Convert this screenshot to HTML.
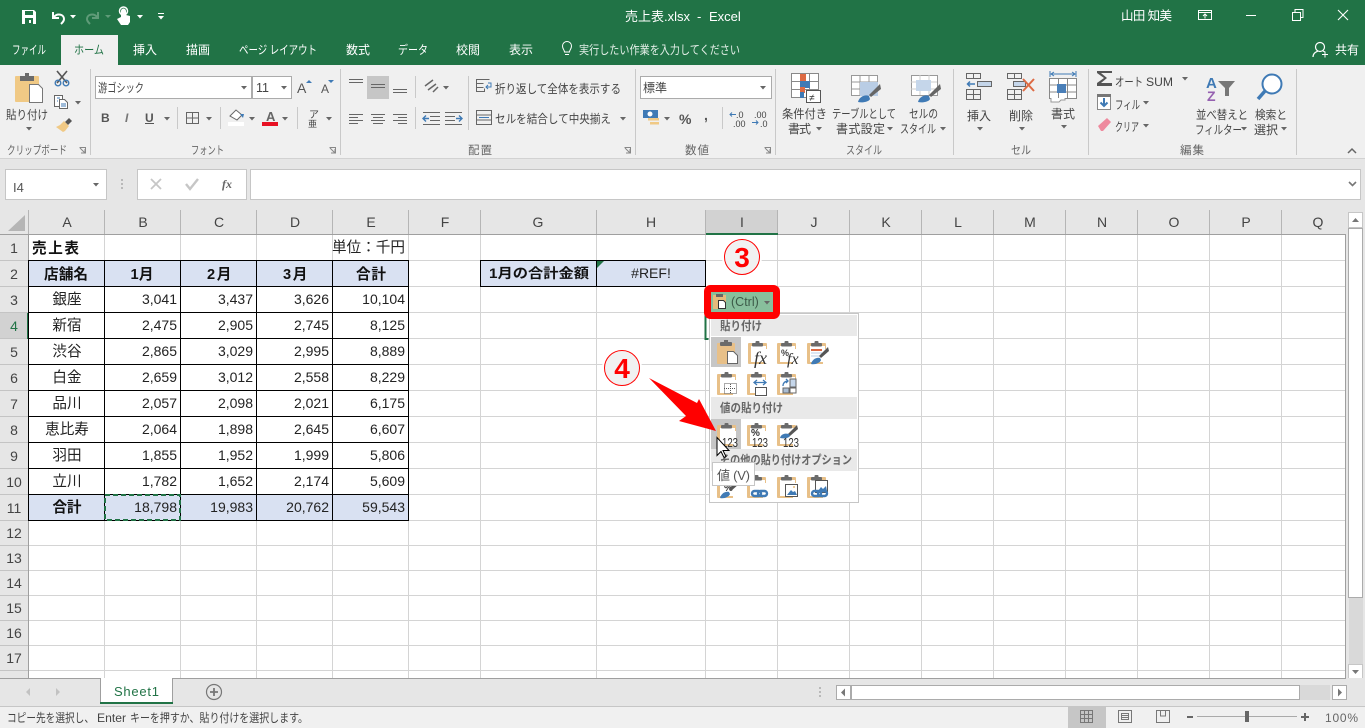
<!DOCTYPE html>
<html lang="ja"><head><meta charset="utf-8"><title>売上表.xlsx - Excel</title>
<style>
html,body{margin:0;padding:0;background:#e6e6e6;overflow:hidden}
svg{display:block;position:absolute;left:0;top:0}
text{font-family:"Liberation Sans","Noto Sans CJK JP",sans-serif;font-size:12px;fill:#444;white-space:pre}
.w{fill:#fff}.tab{fill:#fff;font-size:12px}
.g{fill:#666;font-size:11.5px}
.n{font-size:14px;fill:#222;text-anchor:end}
.c{font-size:14.6px;fill:#222;text-anchor:middle}
.b{font-size:14.6px;fill:#111;font-weight:700;text-anchor:middle}
.h{font-size:14px;fill:#444;text-anchor:middle}
.r{font-size:14px;fill:#444;text-anchor:middle}
.m{font-size:12px;fill:#666;font-weight:700}
.k{font-size:12.5px;fill:#333}
</style></head><body>
<svg width="1365" height="728" viewBox="0 0 1365 728" xmlns="http://www.w3.org/2000/svg">
<defs>
<path id="dd" d="M-3 0h6l-3 3.5z" fill="#666"/>
<path id="dw" d="M-3 0h6l-3 3.5z" fill="#fff"/>
<g id="cb"><rect x="0" y="2" width="19" height="21" rx="1" fill="#e8c088"/><rect x="3" y="5" width="15" height="16" fill="#fff"/><rect x="16" y="8" width="3" height="15" fill="#fff"/><rect x="4" y="2" width="11" height="3.500" rx="1" fill="#6b6b6b"/><rect x="7.500" y="0" width="4" height="3" rx="1" fill="#6b6b6b"/></g>
<g id="chain" fill="none" stroke="#3f7ab5" stroke-width="2.400"><rect x="0" y="0" width="9" height="5" rx="2.500"/><rect x="6" y="0" width="9" height="5" rx="2.500"/></g>
</defs>

<rect width="1365" height="728" fill="#e6e6e6"/>
<!-- title bar -->
<rect width="1365" height="65" fill="#217346"/>
<rect x="61" y="35" width="57" height="31" fill="#f0f0f0"/>
<rect y="65" width="1365" height="93" fill="#f0f0f0"/>
<rect y="158" width="1365" height="1" fill="#d2d2d2"/>

<!-- QAT -->
<path d="M22 10h12l2 2v12H22z" fill="#fff"/><rect x="25" y="11" width="8" height="4" fill="#217346"/><rect x="25" y="18" width="8" height="6" fill="#217346"/><rect x="29" y="20" width="2" height="3" fill="#fff"/>
<path d="M53 12v6h6M54 17c3-4 10-3 10 2 0 2-1 3-3 5" fill="none" stroke="#fff" stroke-width="2"/>
<use href="#dw" x="73" y="15"/>
<path d="M98 12v6h-6M97 17c-3-4-10-3-10 2 0 2 1 3 3 5" fill="none" stroke="#5f9b78" stroke-width="2"/>
<path d="M105 15h6l-3 3z" fill="#5f9b78"/>
<path d="M121 17v-6a2.500 2.500 0 0 1 5 0v4l4 1v6l-2 3h-7l-4-6 2-1z" fill="#fff"/><circle cx="123.500" cy="11" r="4" fill="none" stroke="#fff" stroke-width="1.500"/>
<use href="#dw" x="140" y="15"/>
<rect x="158" y="13" width="6" height="1" fill="#fff"/><use href="#dw" x="161" y="16"/>
<text x="625" y="21" class="w" style="font-size:13px">売上表.xlsx</text><text x="697" y="21" class="w" style="font-size:13px">-</text><text x="709" y="21" class="w" style="font-size:13px">Excel</text>
<text x="1121" y="20" class="w" style="font-size:12.500px" textLength="51">山田 知美</text>
<path d="M1198.500 10.500h13v9h-13zM1198.500 12.500h13M1205 18.500v-4M1203 16l2-2 2 2" fill="none" stroke="#fff"/>
<rect x="1246" y="15" width="10" height="1" fill="#fff"/>
<path d="M1292.500 12.500h8v8h-8zM1295 12v-2.500h8v8h-2.500" fill="none" stroke="#fff"/>
<path d="M1338 10l10 10M1348 10l-10 10" stroke="#fff" stroke-width="1.100"/>

<!-- tabs -->
<text x="12" y="54" class="tab" textLength="34" lengthAdjust="spacingAndGlyphs">ファイル</text>
<text x="74" y="54" style="fill:#217346" textLength="30" lengthAdjust="spacingAndGlyphs">ホーム</text>
<text x="133" y="54" class="tab" textLength="24">挿入</text>
<text x="186" y="54" class="tab" textLength="24">描画</text>
<text x="239" y="54" class="tab" textLength="78" lengthAdjust="spacingAndGlyphs">ページ レイアウト</text>
<text x="346" y="54" class="tab" textLength="24">数式</text>
<text x="398" y="54" class="tab" textLength="30" lengthAdjust="spacingAndGlyphs">データ</text>
<text x="456" y="54" class="tab" textLength="24">校閲</text>
<text x="509" y="54" class="tab" textLength="24">表示</text>
<path d="M564.500 52c0-2-2-3-2-6a4.500 4.500 0 0 1 9 0c0 3-2 4-2 6zM565 54.500h4" fill="none" stroke="#fff"/>
<text x="579" y="54" class="tab" textLength="161" lengthAdjust="spacingAndGlyphs" style="fill:#e4efe8">実行したい作業を入力してください</text>
<circle cx="1320" cy="47" r="4.500" fill="none" stroke="#fff" stroke-width="1.200"/><path d="M1313 57c0-4 3-5 5-6M1323 51l2 1" fill="none" stroke="#fff" stroke-width="1.200"/><path d="M1322 54.500h6M1325 51.500v6" stroke="#fff"/>
<text x="1335" y="54" class="tab" textLength="24">共有</text>

<!-- separators -->
<path d="M90.500 69v86M340.500 69v86M635.500 69v86M775.500 69v86M953.500 69v86M1088.500 69v86M1296.500 69v86" stroke="#c9c9c9"/>
<path d="M415.500 76v22M415.500 107v22M177.500 107v22M220.500 107v22M297.500 107v22M468.500 76v54M722.500 107v22" stroke="#c9c9c9"/>

<!-- clipboard group -->
<rect x="15" y="76" width="24" height="26" rx="1" fill="#f0c985"/>
<rect x="20" y="76" width="14" height="5" fill="#6b6b6b"/><rect x="25" y="73" width="4" height="4" fill="#6b6b6b"/>
<path d="M29.500 84.500h9l4 4v14h-13z" fill="#fff" stroke="#777"/>
<text x="6" y="119" textLength="42" lengthAdjust="spacingAndGlyphs">貼り付け</text><use href="#dd" x="29" y="127"/>
<path d="M57 71l10 12M67 71l-10 12" stroke="#555" stroke-width="1.600"/>
<circle cx="58" cy="83" r="2.800" fill="none" stroke="#3f7ab5" stroke-width="1.400"/><circle cx="66" cy="83" r="2.800" fill="none" stroke="#3f7ab5" stroke-width="1.400"/>
<path d="M54.500 95.500h8v11h-8z" fill="#fff" stroke="#666"/><path d="M59.500 99.500h5l3 3v6h-8z" fill="#fff" stroke="#666"/><path d="M57 98h3M57 101h1M61 104h5M61 106h5" stroke="#3f7ab5"/>
<use href="#dd" x="78" y="101"/>
<path d="M69 118l-4 4 3 3 4-4z" fill="#555"/><path d="M64 121l5 5-4 5-2 1-7-5 4-2z" fill="#f0c985"/>
<text x="7" y="154" class="g" textLength="60" lengthAdjust="spacingAndGlyphs">クリップボード</text>
<path d="M79.500 147.500h6v6M80 148l5 5M85 149v4h-4" fill="none" stroke="#888"/>
<!-- font group -->
<rect x="95.500" y="76.500" width="156" height="22" fill="#fff" stroke="#ababab"/>
<rect x="252.500" y="76.500" width="39" height="22" fill="#fff" stroke="#ababab"/>
<text x="98" y="92" textLength="46" lengthAdjust="spacingAndGlyphs">游ゴシック</text><use href="#dd" x="244" y="86"/>
<text x="256" y="92" style="font-size:12.500px">11</text><use href="#dd" x="284" y="86"/>
<text x="297" y="93" style="font-size:14px;fill:#555">A</text><path d="M306 83h6l-3-3z" fill="#3f7ab5"/>
<text x="321" y="93" style="font-size:12px;fill:#555">A</text><path d="M328 80h6l-3 3z" fill="#3f7ab5"/>
<text x="101" y="122" style="font-weight:700;font-size:12px;fill:#555">B</text>
<text x="125" y="122" style="font-style:italic;font-weight:700;font-size:12px;fill:#777">I</text>
<text x="145" y="122" style="font-weight:700;font-size:12px;fill:#555">U</text><rect x="145" y="123" width="9" height="1" fill="#555"/>
<use href="#dd" x="167" y="117"/>
<path d="M186.500 112.500h12v11h-12zM192.500 112v12M186 118h13" fill="none" stroke="#666"/><use href="#dd" x="209" y="117"/>
<path d="M230 116l6-6 6 5-5 5z" fill="#fff" stroke="#666"/><path d="M240 114h4l-1 4z" fill="#3f7ab5"/><rect x="228" y="122" width="16" height="4" fill="#fff"/><use href="#dd" x="252" y="117"/>
<text x="266" y="121" style="font-size:13px;font-weight:700;fill:#666">A</text><rect x="262" y="122" width="16" height="4" fill="#e81123"/><use href="#dd" x="285" y="117"/>
<text x="309" y="118" style="font-size:10px;fill:#444">ア</text><text x="308" y="127" style="font-size:9px;fill:#444">亜</text><use href="#dd" x="329" y="117"/>
<text x="191" y="154" class="g" textLength="33" lengthAdjust="spacingAndGlyphs">フォント</text>
<path d="M329.500 147.500h6v6M330 148l5 5M335 149v4h-4" fill="none" stroke="#888"/>
<!-- alignment -->
<rect x="367" y="76" width="22" height="23" fill="#c6c6c6"/>
<path d="M349 79.500h14M349 82.500h14M371 84.500h14M371 87.500h14M393 89.500h14M393 92.500h14M349 114.500h14M349 117.500h9M349 120.500h14M349 123.500h9M371 114.500h14M373 117.500h10M371 120.500h14M373 123.500h10M393 114.500h14M398 117.500h9M393 120.500h14M398 123.500h9" stroke="#666"/>
<path d="M425 86l8-6M428 90l8-6M433 92l5-5" stroke="#666" stroke-width="1.500"/><use href="#dd" x="446" y="86"/>
<path d="M423 112.500h17M430 116.500h10M430 120.500h10M423 124.500h17M445 112.500h17M445 116.500h10M445 120.500h10M445 124.500h17" stroke="#666"/>
<path d="M429 118.500h-6M426 115.500l-3 3 3 3M456 118.500h6M459 115.500l3 3-3 3" fill="none" stroke="#3f7ab5" stroke-width="1.400"/>
<path d="M476.500 79.500h13M476.500 83.500h7M476.500 87.500h7M476.500 91.500h8v-3M476.500 79v13" fill="none" stroke="#666"/><path d="M488 83h3v4h-5M488 85l-2 2 2 2" fill="none" stroke="#3f7ab5"/>
<text x="495" y="93" textLength="126" lengthAdjust="spacingAndGlyphs">折り返して全体を表示する</text>
<path d="M476.500 110.500h15v14h-15zM476 115h15M476 120h15" fill="none" stroke="#666"/><path d="M479 117.500h10" stroke="#3f7ab5"/>
<text x="495" y="123" textLength="116" lengthAdjust="spacingAndGlyphs">セルを結合して中央揃え</text><use href="#dd" x="623" y="117"/>
<text x="468" y="154" class="g" textLength="24">配置</text>
<path d="M624.500 147.500h6v6M625 148l5 5M630 149v4h-4" fill="none" stroke="#888"/>
<!-- number -->
<rect x="640.500" y="76.500" width="131" height="22" fill="#fff" stroke="#ababab"/>
<text x="643" y="92" textLength="24">標準</text><use href="#dd" x="763" y="86"/>
<rect x="643" y="110" width="15" height="8" fill="#3f7ab5"/><circle cx="650" cy="114" r="2.500" fill="#fff"/><rect x="648" y="118" width="11" height="2.500" fill="#f0c985"/><rect x="650" y="122" width="9" height="2.500" fill="#f0c985"/>
<use href="#dd" x="667" y="117"/>
<text x="679" y="124" style="font-size:14px;fill:#555;font-weight:700" textLength="13">%</text>
<text x="704" y="120" style="font-size:14px;fill:#555;font-weight:700">,</text>
<text x="736" y="118" style="font-size:9px;fill:#444">.0</text><text x="733" y="127" style="font-size:9px;fill:#444">.00</text>
<path d="M730 114.500h6M732 112.500l-2 2 2 2" fill="none" stroke="#3f7ab5"/>
<text x="754" y="118" style="font-size:9px;fill:#444">.00</text><text x="760" y="127" style="font-size:9px;fill:#444">.0</text>
<path d="M752 122.500h6M756 120.500l2 2-2 2" fill="none" stroke="#3f7ab5"/>
<text x="685" y="154" class="g" textLength="24">数値</text>
<path d="M764.500 147.500h6v6M765 148l5 5M770 149v4h-4" fill="none" stroke="#888"/>
<!-- styles -->
<path d="M791.500 73.500h27v24h-27zM800.500 73v24M809.500 73v24M791 81.500h27M791 89.500h27" fill="#fff" stroke="#888"/>
<rect x="800" y="74" width="6" height="7" fill="#dd6a43"/><rect x="800" y="81" width="10" height="7" fill="#3f7ab5"/><rect x="800" y="87" width="5" height="6" fill="#dd6a43"/><rect x="800" y="92" width="4" height="6" fill="#3f7ab5"/>
<rect x="806.500" y="90.500" width="14" height="12" fill="#fff" stroke="#555"/><text x="809" y="101" style="font-size:10px;fill:#333">≠</text>
<text x="782" y="118" textLength="45" lengthAdjust="spacingAndGlyphs">条件付き</text><text x="788" y="133" textLength="23">書式</text><use href="#dd" x="819" y="127"/>
<path d="M851.500 75.500h26v20h-26zM860 75v20M869 75v20M851 82h26M851 89h26" fill="#fff" stroke="#999"/>
<rect x="860" y="82" width="18" height="14" fill="#b9cde5"/><path d="M880 84l-11 11 2 2 10-8z" fill="#666"/><path d="M858 102c1-5 7-8 11-6l1 3c-1 3-8 4-12 3z" fill="#3f7ab5"/>
<text x="832" y="118" textLength="64" lengthAdjust="spacingAndGlyphs">テーブルとして</text><text x="836" y="133" textLength="49">書式設定</text><use href="#dd" x="890" y="127"/>
<path d="M911.500 75.500h26v20h-26z" fill="#fff" stroke="#999"/><path d="M911 82h26M911 89h26M920 75v20M929 75v20" stroke="#ccc"/>
<rect x="916" y="80" width="15" height="11" fill="#c5d6ea"/><path d="M940 84l-11 11 2 2 10-8z" fill="#666"/><path d="M918 102c1-5 7-8 11-6l1 3c-1 3-8 4-12 3z" fill="#3f7ab5"/>
<text x="909" y="118" textLength="29" lengthAdjust="spacingAndGlyphs">セルの</text><text x="900" y="133" textLength="36" lengthAdjust="spacingAndGlyphs">スタイル</text><use href="#dd" x="943" y="127"/>
<text x="846" y="154" class="g" textLength="36" lengthAdjust="spacingAndGlyphs">スタイル</text>
<!-- cells -->
<path d="M966.500 73.500h14v5h-14zM973.500 73v5M966.500 89.500h14v10h-14zM973.500 89v10M966 94.500h14" fill="none" stroke="#666"/>
<rect x="977.500" y="81.500" width="14" height="5" fill="#c5d6ea" stroke="#666"/><path d="M975 84h-7M970 81.500l-2.500 2.500 2.500 2.500" fill="none" stroke="#3f7ab5" stroke-width="1.500"/>
<text x="967" y="120" textLength="24">挿入</text><use href="#dd" x="980" y="127"/>
<path d="M1007.500 73.500h14v5h-14zM1014.500 73v5M1007.500 89.500h14v10h-14zM1014.500 89v10M1007 94.500h14" fill="none" stroke="#666"/>
<rect x="1013.500" y="81.500" width="12" height="5" fill="#c5d6ea" stroke="#666"/><path d="M1023 79l11 12M1034 79l-11 12" stroke="#dd6a43" stroke-width="2"/>
<text x="1009" y="120" textLength="24">削除</text><use href="#dd" x="1022" y="127"/>
<path d="M1049.500 78.500h27v20h-27zM1058.500 78v20M1067.500 78v20M1049 85h27M1049 92h27" fill="#fff" stroke="#888"/><rect x="1057" y="84" width="9" height="9" fill="#4a7fb8"/>
<path d="M1050 71v6M1076 71v6M1051 74h24M1054 72l-3 2 3 2M1072 72l3 2-3 2" fill="none" stroke="#3f7ab5"/>
<path d="M1051 98v4h8l2-2h4v-2" fill="#fff" stroke="#999"/>
<text x="1051" y="118" textLength="24">書式</text><use href="#dd" x="1064" y="125"/>
<text x="1011" y="154" class="g" textLength="20" lengthAdjust="spacingAndGlyphs">セル</text>
<!-- editing -->
<path d="M1112 71h-15v2l7 5-7 5v3h15v-3h-11l6-5-6-5h11z" fill="#555"/>
<text x="1115" y="86" textLength="28" lengthAdjust="spacingAndGlyphs">オート</text><text x="1146" y="86" textLength="27" lengthAdjust="spacingAndGlyphs">SUM</text><use href="#dd" x="1185" y="77"/>
<rect x="1097.500" y="94.500" width="13" height="15" fill="#fff" stroke="#888"/><rect x="1097" y="94" width="14" height="3" fill="#777"/><path d="M1104 98v8M1100.500 102.500l3.500 3.500 3.500-3.500" fill="none" stroke="#3f7ab5" stroke-width="2"/>
<text x="1115" y="109" textLength="25" lengthAdjust="spacingAndGlyphs">フィル</text><use href="#dd" x="1146" y="101"/>
<path d="M1098 126l9-8 4 4-8 9h-2z" fill="#ee8a9e"/>
<text x="1115" y="131" textLength="24" lengthAdjust="spacingAndGlyphs">クリア</text><use href="#dd" x="1146" y="124"/>
<text x="1206" y="88" style="font-size:15px;font-weight:700;fill:#3f7ab5">A</text><text x="1207" y="101" style="font-size:14px;font-weight:700;fill:#9560b0">Z</text>
<path d="M1218 81h17l-6 7v8l-4 0v-8z" fill="#777"/>
<text x="1196" y="119" textLength="52" lengthAdjust="spacingAndGlyphs">並べ替えと</text><text x="1195" y="134" textLength="47" lengthAdjust="spacingAndGlyphs">フィルター</text><use href="#dd" x="1244" y="127"/>
<circle cx="1272" cy="84" r="9.500" fill="#fff" stroke="#3f7ab5" stroke-width="2"/><path d="M1265 91l-7 8" stroke="#3f7ab5" stroke-width="3.500"/>
<text x="1255" y="119" textLength="32" lengthAdjust="spacingAndGlyphs">検索と</text><text x="1254" y="134" textLength="24">選択</text><use href="#dd" x="1284" y="127"/>
<text x="1180" y="154" class="g" textLength="24">編集</text>
<path d="M1348 153l4-4 4 4" fill="none" stroke="#666" stroke-width="1.500"/>

<!-- formula bar -->
<rect x="5.500" y="169.500" width="101" height="30" fill="#fff" stroke="#c6c6c6"/>
<text x="13" y="192" style="font-size:13px;fill:#555">I4</text><use href="#dd" x="96" y="183"/>
<path d="M122 179v2M122 183v2M122 187v2" stroke="#aaa" stroke-width="1.500"/>
<rect x="137.500" y="169.500" width="109" height="30" fill="#fff" stroke="#c6c6c6"/>
<path d="M151 179l10 10M161 179l-10 10" stroke="#c6c6c6" stroke-width="1.800"/>
<path d="M186 184l4 5 8-10" fill="none" stroke="#c6c6c6" stroke-width="2.400"/>
<text x="222" y="188" style="font-family:'Liberation Serif',serif;font-style:italic;font-weight:700;font-size:12px;fill:#666">fx</text>
<rect x="250.500" y="169.500" width="1110" height="30" fill="#fff" stroke="#c6c6c6"/>
<path d="M1349 182l3.500 3.500 3.500-3.500" fill="none" stroke="#777" stroke-width="1.600"/>

<!-- column / row headers -->
<rect x="0" y="210" width="1346" height="24" fill="#e6e6e6"/>
<rect x="706" y="210" width="71" height="24" fill="#d2d2d2"/>
<rect x="0" y="313" width="28" height="25" fill="#d2d2d2"/>
<path d="M8 231h17v-16z" fill="#b5b5b5"/>
<path d="M28.500 210v24M104.500 210v24M180.500 210v24M256.500 210v24M332.500 210v24M408.500 210v24M480.500 210v24M596.500 210v24M705.500 210v24M777.500 210v24M849.500 210v24M921.500 210v24M993.500 210v24M1065.500 210v24M1137.500 210v24M1209.500 210v24M1281.500 210v24" stroke="#b5b5b5"/>
<rect x="29" y="235" width="1316" height="443" fill="#fff"/>
<path d="M104.500 235v443M180.500 235v443M256.500 235v443M332.500 235v443M408.500 235v443M480.500 235v443M596.500 235v443M705.500 235v443M777.500 235v443M849.500 235v443M921.500 235v443M993.500 235v443M1065.500 235v443M1137.500 235v443M1209.500 235v443M1281.500 235v443" stroke="#d4d4d4"/>
<path d="M0 260.500h1345M0 286.500h1345M0 312.500h1345M0 338.500h1345M0 364.500h1345M0 390.500h1345M0 416.500h1345M0 442.500h1345M0 468.500h1345M0 494.500h1345M0 520.500h1345M0 545.500h1345M0 570.500h1345M0 595.500h1345M0 620.500h1345M0 645.500h1345M0 670.500h1345" stroke="#d4d4d4"/>
<path d="M0 260.500h28M0 286.500h28M0 312.500h28M0 338.500h28M0 364.500h28M0 390.500h28M0 416.500h28M0 442.500h28M0 468.500h28M0 494.500h28M0 520.500h28M0 545.500h28M0 570.500h28M0 595.500h28M0 620.500h28M0 645.500h28M0 670.500h28" stroke="#c4c4c4"/>
<path d="M0 234.500h1346M28.500 234v444M1345.500 234v444" stroke="#9f9f9f"/>
<rect x="27" y="313" width="2" height="26" fill="#217346"/>
<rect x="706" y="233" width="72" height="2" fill="#217346"/>

<text class="h" x="67" y="227">A</text><text class="h" x="143" y="227">B</text><text class="h" x="219" y="227">C</text><text class="h" x="295" y="227">D</text><text class="h" x="371" y="227">E</text><text class="h" x="445" y="227">F</text><text class="h" x="538" y="227">G</text><text class="h" x="651" y="227">H</text><text class="h" x="742" y="227">I</text><text class="h" x="814" y="227">J</text><text class="h" x="886" y="227">K</text><text class="h" x="958" y="227">L</text><text class="h" x="1030" y="227">M</text><text class="h" x="1102" y="227">N</text><text class="h" x="1174" y="227">O</text><text class="h" x="1246" y="227">P</text><text class="h" x="1318" y="227">Q</text>
<text class="r" x="14" y="253">1</text><text class="r" x="14" y="279">2</text><text class="r" x="14" y="305">3</text><text class="r" x="14" y="331" style="fill:#217346">4</text><text class="r" x="14" y="357">5</text><text class="r" x="14" y="383">6</text><text class="r" x="14" y="409">7</text><text class="r" x="14" y="435">8</text><text class="r" x="14" y="461">9</text><text class="r" x="14" y="487">10</text><text class="r" x="14" y="513">11</text><text class="r" x="14" y="538">12</text><text class="r" x="14" y="563">13</text><text class="r" x="14" y="588">14</text><text class="r" x="14" y="613">15</text><text class="r" x="14" y="638">16</text><text class="r" x="14" y="663">17</text>

<!-- table fills -->
<rect x="29" y="261" width="380" height="25" fill="#d9e1f2"/>
<rect x="29" y="495" width="380" height="25" fill="#d9e1f2"/>
<rect x="481" y="261" width="224" height="25" fill="#d9e1f2"/>
<path d="M28.500 260v261M104.500 260v261M180.500 260v261M256.500 260v261M332.500 260v261M408.500 260v261M28 260.500h381M28 286.500h381M28 312.500h381M28 338.500h381M28 364.500h381M28 390.500h381M28 416.500h381M28 442.500h381M28 468.500h381M28 494.500h381M28 520.500h381M480.500 260v27M596.500 260v27M705.500 260v27M480 260.500h226M480 286.500h226" stroke="#000"/>
<path d="M597 261h7l-7 7z" fill="#217346"/>

<!-- cell text -->
<text x="32" y="253" style="font-size:14.600px;font-weight:700;fill:#111" textLength="47">売上表</text>
<text x="332" y="252" style="font-size:14.600px;fill:#222" textLength="73">単位：千円</text>
<text class="b" x="66" y="279" textLength="44">店舗名</text><text class="b" x="142" y="279" textLength="23">1月</text><text class="b" x="211" y="279">2</text><text class="b" x="224" y="279">月</text><text class="b" x="287" y="279">3</text><text class="b" x="300" y="279">月</text><text class="b" x="371" y="279" textLength="30">合計</text>
<text class="c" x="67" y="304">銀座</text><text class="n" x="177" y="304">3,041</text><text class="n" x="253" y="304">3,437</text><text class="n" x="329" y="304">3,626</text><text class="n" x="405" y="304">10,104</text>
<text class="c" x="67" y="330">新宿</text><text class="n" x="177" y="330">2,475</text><text class="n" x="253" y="330">2,905</text><text class="n" x="329" y="330">2,745</text><text class="n" x="405" y="330">8,125</text>
<text class="c" x="67" y="356">渋谷</text><text class="n" x="177" y="356">2,865</text><text class="n" x="253" y="356">3,029</text><text class="n" x="329" y="356">2,995</text><text class="n" x="405" y="356">8,889</text>
<text class="c" x="67" y="382">白金</text><text class="n" x="177" y="382">2,659</text><text class="n" x="253" y="382">3,012</text><text class="n" x="329" y="382">2,558</text><text class="n" x="405" y="382">8,229</text>
<text class="c" x="67" y="408">品川</text><text class="n" x="177" y="408">2,057</text><text class="n" x="253" y="408">2,098</text><text class="n" x="329" y="408">2,021</text><text class="n" x="405" y="408">6,175</text>
<text class="c" x="67" y="434">恵比寿</text><text class="n" x="177" y="434">2,064</text><text class="n" x="253" y="434">1,898</text><text class="n" x="329" y="434">2,645</text><text class="n" x="405" y="434">6,607</text>
<text class="c" x="67" y="460">羽田</text><text class="n" x="177" y="460">1,855</text><text class="n" x="253" y="460">1,952</text><text class="n" x="329" y="460">1,999</text><text class="n" x="405" y="460">5,806</text>
<text class="c" x="67" y="486">立川</text><text class="n" x="177" y="486">1,782</text><text class="n" x="253" y="486">1,652</text><text class="n" x="329" y="486">2,174</text><text class="n" x="405" y="486">5,609</text>
<text class="b" x="67" y="512" textLength="29">合計</text><text class="n" x="177" y="512">18,798</text><text class="n" x="253" y="512">19,983</text><text class="n" x="329" y="512">20,762</text><text class="n" x="405" y="512">59,543</text>
<text x="489" y="278" style="font-size:13.500px;font-weight:700;fill:#111" textLength="100" lengthAdjust="spacingAndGlyphs">1月の合計金額</text>
<text x="651" y="278" style="font-size:14px;fill:#222;text-anchor:middle">#REF!</text>
<rect x="105" y="495" width="75" height="25" fill="none" stroke="#217346" stroke-width="2" stroke-dasharray="5 3"/>

<!-- selection -->
<path d="M705.500 313v26h3" fill="none" stroke="#217346" stroke-width="2"/>

<!-- scrollbars -->
<rect x="1346" y="210" width="19" height="468" fill="#e6e6e6"/>
<rect x="1348.500" y="228.500" width="14" height="369" fill="#fff" stroke="#ababab"/>
<rect x="1349" y="598" width="14" height="66" fill="#d9d9d9"/>
<rect x="1348.500" y="212.500" width="14" height="15" fill="#fff" stroke="#c6c6c6"/><path d="M1352 222h7l-3.500-4z" fill="#777"/>
<rect x="1348.500" y="664.500" width="14" height="14" fill="#fff" stroke="#c6c6c6"/><path d="M1352 670h7l-3.500 4z" fill="#777"/>
<rect x="0" y="678" width="1365" height="28" fill="#e6e6e6"/>
<path d="M0 678.500h100M173 678.500h1173" stroke="#9f9f9f"/>
<path d="M820 687v2M820 691v2M820 695v2" stroke="#aaa" stroke-width="1.500"/>
<rect x="836.500" y="685.500" width="14" height="14" fill="#fff" stroke="#ababab"/><path d="M845 688.500v8l-4-4z" fill="#777"/>
<rect x="851.500" y="685.500" width="448" height="14" fill="#fff" stroke="#ababab"/>
<rect x="1300" y="685" width="30" height="15" fill="#d9d9d9"/>
<rect x="1332.500" y="685.500" width="14" height="14" fill="#fff" stroke="#ababab"/><path d="M1338 688.500v8l4-4z" fill="#777"/>
<path d="M30 688v8l-4-4zM56 688v8l4-4z" fill="#c2c2c2"/>
<path d="M100.500 678v26M172.500 678v26" stroke="#9f9f9f"/>
<rect x="101" y="678" width="71" height="25" fill="#fff"/>
<rect x="100" y="702" width="73" height="2" fill="#217346"/>
<text x="114" y="696" style="font-size:13px;fill:#217346" textLength="45">Sheet1</text>
<circle cx="214" cy="692" r="7.500" fill="none" stroke="#777" stroke-width="1.200"/><path d="M210 692h8M214 688v8" stroke="#777" stroke-width="1.800"/>

<!-- status bar -->
<rect x="0" y="706" width="1365" height="22" fill="#f0f0f0"/>
<rect x="0" y="706" width="1365" height="1" fill="#c6c6c6"/>
<text x="7" y="722" textLength="87" lengthAdjust="spacingAndGlyphs">コピー先を選択し、</text>
<text x="97" y="722" textLength="29" lengthAdjust="spacingAndGlyphs">Enter</text>
<text x="130" y="722" textLength="178" lengthAdjust="spacingAndGlyphs">キーを押すか、貼り付けを選択します。</text>
<rect x="1068" y="707" width="38" height="21" fill="#c6c6c6"/>
<path d="M1080.500 710.500h12v12h-12zM1084.500 710v13M1088.500 710v13M1080 714.500h13M1080 718.500h13" fill="none" stroke="#777"/>
<path d="M1118.500 710.500h13v12h-13zM1121.500 713.500h7v6h-7zM1122 715.500h6M1122 717.500h6" fill="none" stroke="#777"/>
<path d="M1156.500 710.500h13v12h-13zM1160.500 710v6h5v-6" fill="none" stroke="#777"/>
<rect x="1187" y="716" width="6" height="2" fill="#666"/>
<rect x="1197" y="716" width="100" height="1" fill="#aaa"/><rect x="1245" y="711" width="4" height="11" fill="#666"/>
<path d="M1301 717h8M1305 713v8" stroke="#666" stroke-width="2"/>
<text x="1325" y="722" style="font-size:12px;fill:#666" textLength="33">100%</text>

<!-- paste gallery -->
<rect x="709.500" y="313.500" width="149" height="189" fill="#fff" stroke="#c6c6c6"/>
<rect x="711" y="315" width="146" height="21" fill="#e9e9e9"/>
<rect x="711" y="397" width="146" height="22" fill="#e9e9e9"/>
<rect x="711" y="449" width="146" height="22" fill="#e9e9e9"/>
<rect x="711" y="337" width="30" height="30" fill="#c6c6c6"/>
<rect x="711" y="419" width="30" height="30" fill="#c6c6c6"/>
<text x="720" y="330" class="m" textLength="42" lengthAdjust="spacingAndGlyphs">貼り付け</text>
<text x="720" y="412" class="m" textLength="63" lengthAdjust="spacingAndGlyphs">値の貼り付け</text>
<text x="720" y="464" class="m" textLength="132" lengthAdjust="spacingAndGlyphs">その他の貼り付けオプション</text>

<!-- row 1 -->
<rect x="717" y="343" width="18" height="21" rx="1" fill="#e8c088"/><rect x="720" y="342" width="12" height="4" rx="1" fill="#6b6b6b"/><rect x="724" y="340" width="4" height="3" fill="#6b6b6b"/>
<path d="M727.500 351.500h6l4 4v8h-10z" fill="#fff" stroke="#666"/>
<use href="#cb" x="748" y="341"/><text x="754" y="364" style="font-family:'Liberation Serif',serif;font-style:italic;font-size:18px;fill:#333">fx</text>
<use href="#cb" x="777" y="341"/><text x="781" y="356" style="font-size:9px;font-weight:700;fill:#444">%</text><text x="787" y="364" style="font-family:'Liberation Serif',serif;font-style:italic;font-size:16px;fill:#333">fx</text>
<use href="#cb" x="807" y="341"/><rect x="811" y="349" width="11" height="2" fill="#dd6a43"/><path d="M811 353h11M811 356h9" stroke="#b9cde5"/><path d="M828 347l-9 9 2 2 8-7z" fill="#555"/><path d="M811 364c1-4 5-7 9-6l1 2c-1 3-6 5-10 4z" fill="#3f7ab5"/>
<!-- row 2 -->
<use href="#cb" x="717" y="372"/><rect x="724.500" y="383.500" width="12" height="10" fill="#fff" stroke="#555" stroke-dasharray="1 1"/><path d="M730.500 384v9M724 388.500h12" stroke="#555" stroke-dasharray="1 1"/>
<use href="#cb" x="747" y="372"/><rect x="755.500" y="387.500" width="11" height="8" fill="#fff" stroke="#555"/><path d="M754 382.500h12M757 380l-3 2.500 3 2.500M763 380l3 2.500-3 2.500" fill="none" stroke="#3f7ab5" stroke-width="1.300"/>
<use href="#cb" x="777" y="372"/><rect x="790" y="379" width="6" height="8" fill="#c5d6ea" stroke="#666"/><rect x="783" y="388" width="6" height="5" fill="#a9bcd2" stroke="#666"/><rect x="790" y="388" width="6" height="5" fill="#fff" stroke="#666"/><path d="M783 386c0-3 2-5 5-5M786 379l2 2-2 2" fill="none" stroke="#3f7ab5" stroke-width="1.300"/>
<!-- row 3 -->
<use href="#cb" x="717" y="423"/><text x="722" y="447" class="k" textLength="16" lengthAdjust="spacingAndGlyphs">123</text>
<use href="#cb" x="747" y="423"/><text x="751" y="436" style="font-size:10px;font-weight:700;fill:#333">%</text><text x="752" y="447" class="k" textLength="16" lengthAdjust="spacingAndGlyphs">123</text>
<use href="#cb" x="777" y="423"/><path d="M797 425l-9 9 2 2 8-7z" fill="#555"/><path d="M780 438c1-4 5-5 9-4l1 2c-1 2-6 3-10 2z" fill="#3f7ab5"/><text x="783" y="447" class="k" textLength="16" lengthAdjust="spacingAndGlyphs">123</text>
<!-- row 4 -->
<use href="#cb" x="717" y="475"/><text x="724" y="491" style="font-size:10px;font-weight:700;fill:#333">%</text><path d="M737 480l-8 9 2 2 8-7z" fill="#555"/><path d="M720 498c1-4 5-7 9-6l1 2c-1 3-6 5-10 4z" fill="#3f7ab5"/>
<use href="#cb" x="747" y="475"/><use href="#chain" x="752" y="491"/>
<use href="#cb" x="777" y="475"/><rect x="785.500" y="484.500" width="12" height="12" fill="#fff" stroke="#555"/><path d="M787 495l4-5 2 2 2-1 2 4z" fill="#3f7ab5"/><circle cx="794" cy="487" r="1" fill="#e5bb7c"/>
<use href="#cb" x="807" y="475"/><rect x="815.500" y="480.500" width="12" height="12" fill="#fff" stroke="#555"/><path d="M818 491l3-4 2 2 3-3 1 5z" fill="#3f7ab5"/><use href="#chain" x="812" y="491"/>

<!-- tooltip -->
<rect x="712.500" y="462.500" width="42" height="23" fill="#fff" stroke="#c6c6c6"/>
<text x="717" y="480" style="font-size:13px;fill:#555" textLength="33">値 (V)</text>

<!-- ctrl button (over gallery) -->
<rect x="707.500" y="288.500" width="69" height="27" rx="3" fill="#88bf9c" stroke="#f00" stroke-width="7"/>
<rect x="713" y="295" width="13" height="14" fill="#e5bb7c"/><rect x="716" y="294" width="7" height="3" fill="#666"/><path d="M718.500 300.500h5l2 2v6h-7z" fill="#fff" stroke="#333"/>
<text x="731" y="306" style="font-size:12.500px;fill:#3c5a48">(Ctrl)</text><use href="#dd" x="767" y="301"/>

<!-- circled numbers -->
<circle cx="742" cy="257" r="20" fill="#fff"/><circle cx="742" cy="257" r="17.500" fill="#f1f1f1" stroke="#f00" stroke-width="1"/>
<text x="742" y="267" style="font-size:28px;font-weight:700;fill:#f00;text-anchor:middle">3</text>
<circle cx="622" cy="368" r="20" fill="#fff"/><circle cx="622" cy="368" r="17.500" fill="#f1f1f1" stroke="#f00" stroke-width="1"/>
<text x="622" y="378" style="font-size:28px;font-weight:700;fill:#f00;text-anchor:middle">4</text>

<!-- arrow -->
<path d="M649 378L697 403 699 399 716 431 679 421 686 416z" fill="#f00"/>
<!-- cursor -->
<path d="M717 437.500v18l4-4 3 6 2-1-3-6h6z" fill="#fff" stroke="#000" stroke-width="1"/>
</svg>
</body></html>
